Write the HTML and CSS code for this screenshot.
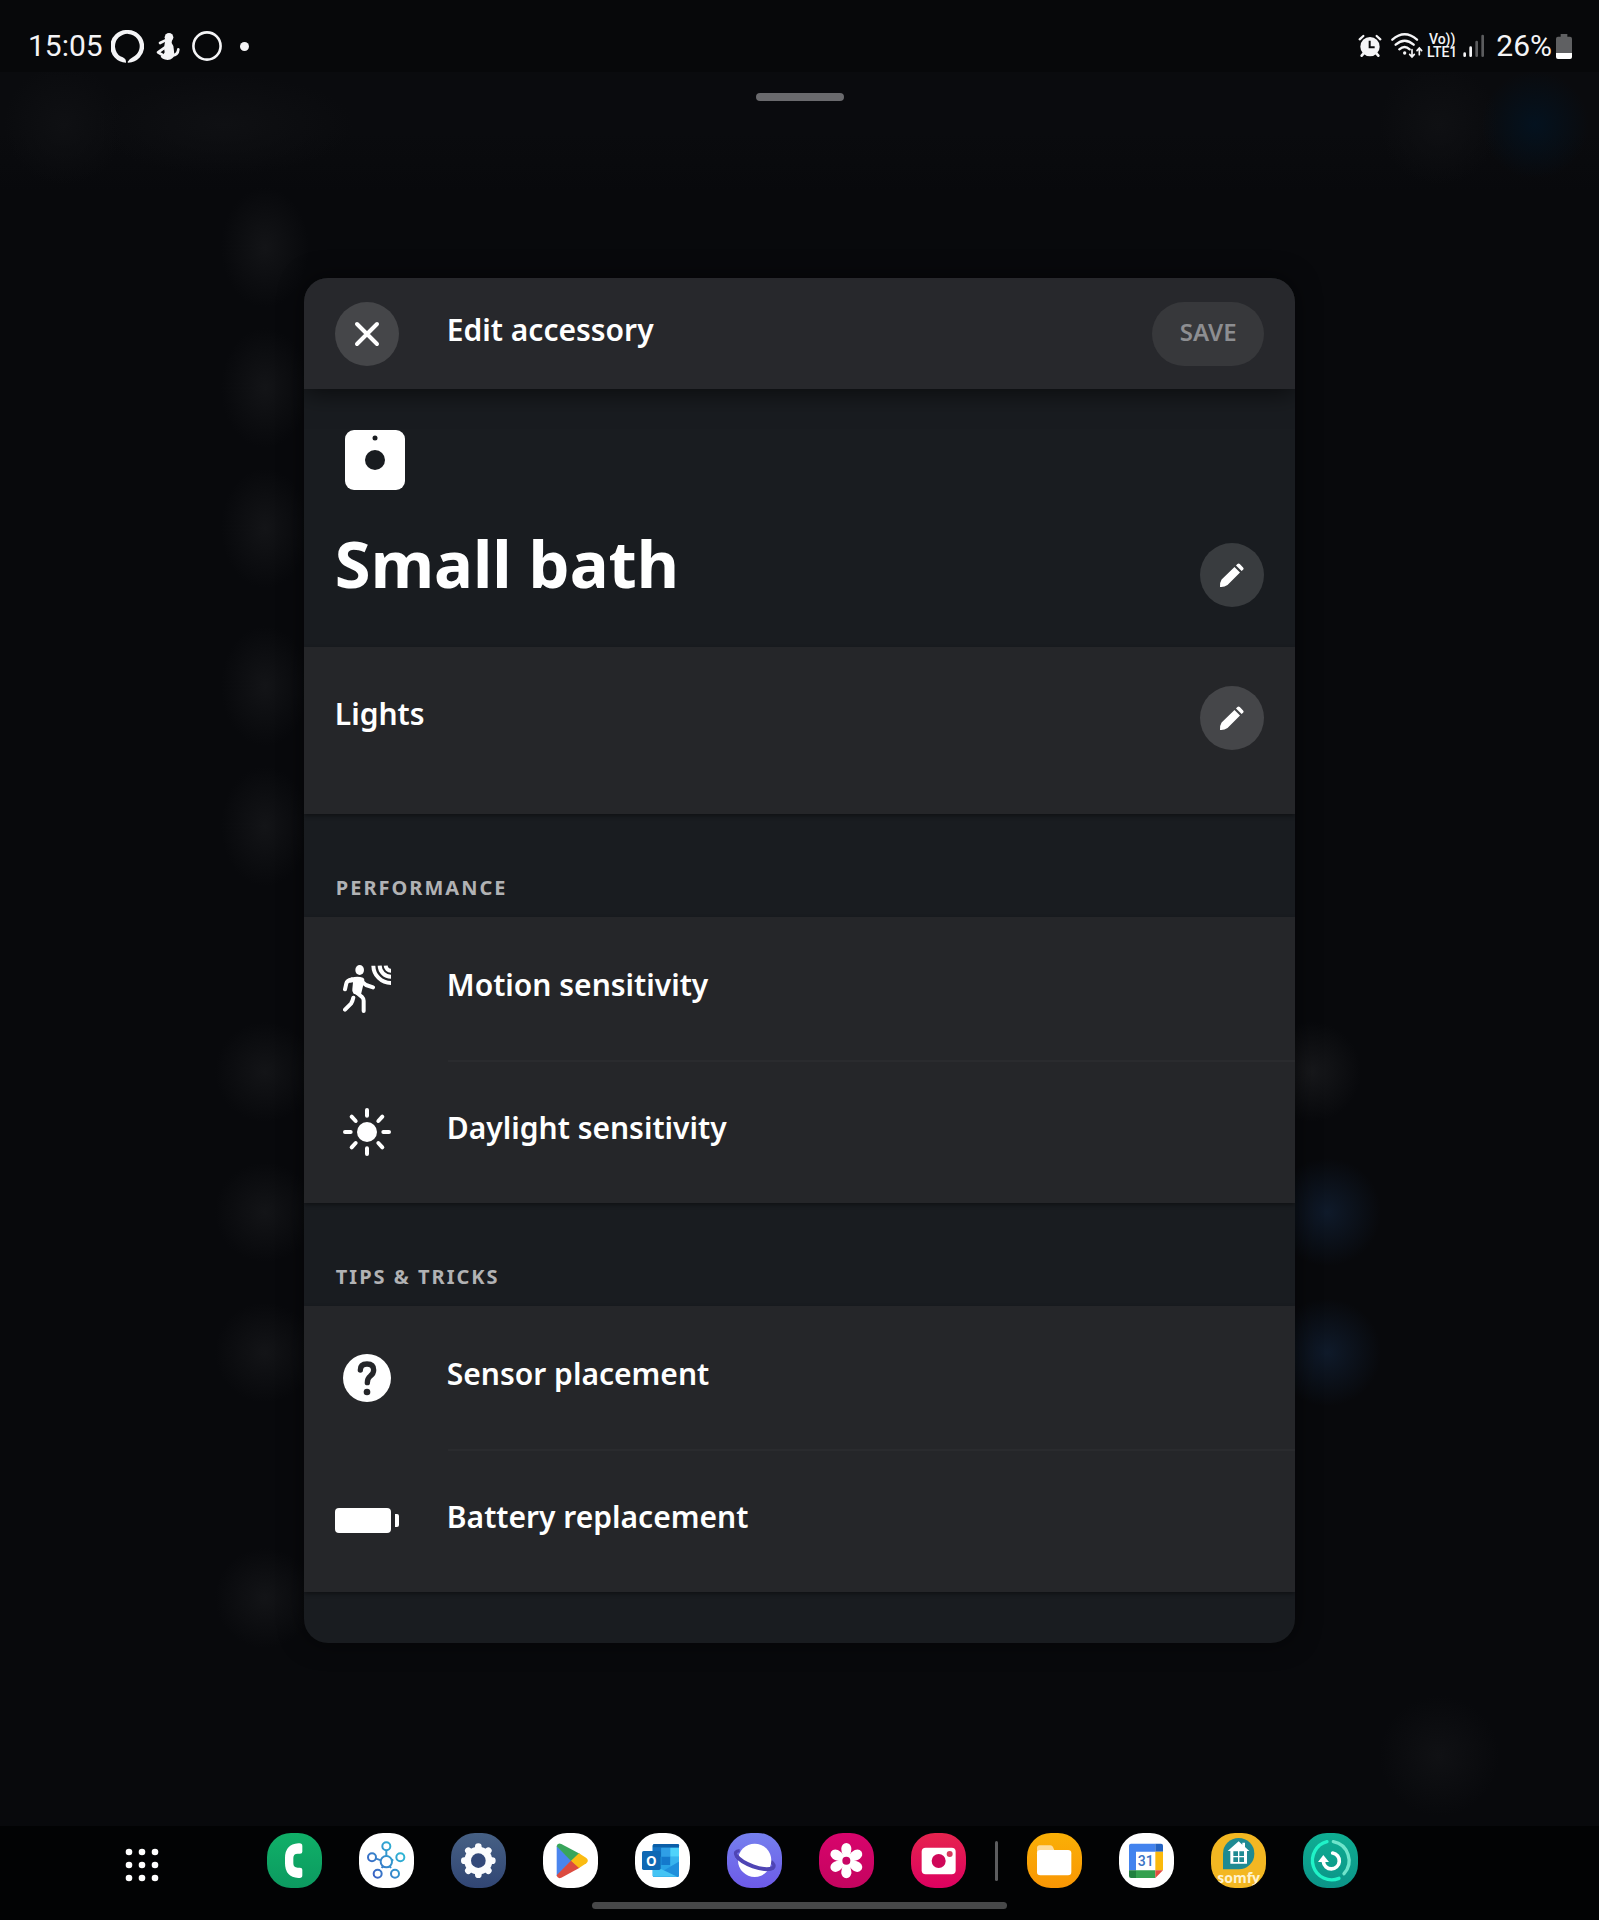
FILE: index.html
```
<!DOCTYPE html>
<html lang="en">

<head>
  <meta charset="UTF-8">
  <meta name="viewport" content="width=device-width, initial-scale=1.0">
  <title>Edit accessory</title>
  <link rel="stylesheet" href="styles.css">
</head>

<body>
  <header class="status-bar">
    <div class="status-left">
      <span class="clock">15:05</span>
      <svg class="ring-icon" width="33" height="33" viewBox="0 0 99 99">
        <path fill="#f4f4f6" fill-rule="evenodd" d="M49 0a49 49 0 0 1 3 98q-3 0-2-3 5-8 15-13A37 37 0 1 0 28 79q17 5 17 16v3A49 49 0 0 1 49 0z" />
      </svg>
      <svg class="figure-icon" width="24" height="27" viewBox="0 0 72 81">
        <g fill="none" stroke="#f4f4f6" stroke-linecap="round" stroke-linejoin="round">
          <path stroke-width="8" d="M28 22 12 30M26 44 6 58l14 8M48 68q18-2 19-19" />
        </g>
        <circle cx="39" cy="13" r="13" fill="#f4f4f6" />
        <path fill="#f4f4f6" d="M28 20h20l-1 10q6 8 6 16l2 18q-2 16-20 17Q17 80 14 70q10-4 12-12l-2-14z" />
      </svg>
      <svg width="30" height="30" viewBox="0 0 30 30">
        <circle cx="15" cy="15" r="13.6" fill="none" stroke="#f4f4f6" stroke-width="2.6" />
      </svg>
      <span class="more-dot"></span>
    </div>
    <div class="status-right">
      <svg width="24" height="24" viewBox="0 0 72 72">
        <g stroke="#f4f4f6" stroke-linecap="round" fill="none">
          <path stroke-width="7" d="M5 16 16 6M56 6l11 10" />
          <path stroke-width="8" d="m17 58-6 7M55 58l6 7" />
        </g>
        <circle cx="36" cy="38" r="29" fill="#f4f4f6" />
        <path d="M35 20v20h15" fill="none" stroke="#08090b" stroke-width="6" />
      </svg>
      <svg class="wifi-icon" width="32" height="26" viewBox="0 0 96 78">
        <g fill="none" stroke="#f4f4f6" stroke-width="7" stroke-linecap="round">
          <path d="M4 20Q41-12 78 20M14 35q27-24 54 0M25 49q16-14 31 0" />
          <path stroke-width="5" d="M63 50v20M56 64l7 8 7-8M85 65V47M78 53l7-8 7 8" />
        </g>
        <circle cx="41" cy="60" r="5" fill="#f4f4f6" />
      </svg>
      <span class="volte"><span>Vo))</span><span>LTE1</span></span>
      <svg class="signal-icon" width="22" height="24" viewBox="0 0 66 72">
        <g stroke-width="8" stroke-linecap="round">
          <path stroke="#f4f4f6" d="M5 59v6M23 41v24" />
          <path stroke="#5b5c5e" d="M41 24v41M59 6v59" />
        </g>
      </svg>
      <span class="percent">26%</span>
      <svg width="16" height="25" viewBox="0 0 48 75">
        <path fill="#5f6062" d="M14 0h20v8h8q6 0 6 6v43H0V14q0-6 6-6h8z" />
        <path fill="#fff" d="M0 57h48v12q0 6-6 6H6q-6 0-6-6z" />
      </svg>
    </div>
  </header>

  <div class="screen">
    <div class="drag-handle"></div>
    <main class="stage">
      <section class="dialog" role="dialog" aria-labelledby="dialog-title">
        <div class="dialog-header">
          <button class="round-btn" type="button" aria-label="Close">
            <svg width="26" height="26" viewBox="0 0 26 26">
              <path d="m3 3 20 20M23 3 3 23" fill="none" stroke="#fff" stroke-width="4" stroke-linecap="round" />
            </svg>
          </button>
          <h1 id="dialog-title" class="dialog-title">Edit accessory</h1>
          <button class="save-btn" type="button" disabled>SAVE</button>
        </div>

        <div class="hero">
          <svg class="device-icon" width="60" height="60" viewBox="0 0 60 60">
            <rect width="60" height="60" rx="9" fill="#fff" />
            <circle cx="30" cy="30" r="10" fill="#191c20" />
            <circle cx="30" cy="8" r="2.5" fill="#191c20" />
          </svg>
          <div class="hero-row">
            <h2 class="device-name">Small bath</h2>
            <button class="round-btn hero-btn" type="button" aria-label="Edit name">
              <svg width="26" height="26" viewBox="0 0 26 26">
                <path fill="#fff" d="M1 25q-.6-4 1.600-7.500L15.500 5l5.500 5.500L8.500 23Q5 25.500 1 25zM17 3.500l1.400-1.400q1.200-1.200 2.400 0l3.300 3.300q1.200 1.200 0 2.400L22.600 9.100z" />
              </svg>
            </button>
          </div>
        </div>

        <div class="room">
          <span class="label">Lights</span>
          <button class="round-btn" type="button" aria-label="Edit room">
            <svg width="26" height="26" viewBox="0 0 26 26">
              <path fill="#fff" d="M1 25q-.6-4 1.600-7.500L15.500 5l5.500 5.500L8.500 23Q5 25.500 1 25zM17 3.500l1.400-1.400q1.200-1.200 2.400 0l3.300 3.300q1.200 1.200 0 2.400L22.600 9.100z" />
            </svg>
          </button>
        </div>

        <h3 class="section-title">PERFORMANCE</h3>
        <div class="list">
          <button class="row" type="button">
            <span class="row-icon">
              <svg width="48" height="48" viewBox="0 0 144 144">
                <ellipse cx="50" cy="15" rx="13" ry="15" fill="#fff" />
                <path fill="#fff" d="M24 38q20-5 36 0 5 3 4 9l-7 29-4 16-21-6q-6-6-4-14l2-20-12 2z" />
                <g fill="none" stroke="#fff" stroke-width="12" stroke-linecap="round" stroke-linejoin="round">
                  <path d="M26 43q-14 3-16 12L6 73M57 50l12 10 21 7M38 80l20 17q4 4 4 10v31" />
                  <path d="M31 98q-2 10-7 18L6 134" />
                </g>
                <path fill="none" stroke="#fff" stroke-width="12" d="M91 2a53 53 0 0 0 53 52M110 2a34 34 0 0 0 34 33M128 2a16 16 0 0 0 16 15" />
              </svg>
            </span>
            <span class="label">Motion sensitivity</span>
          </button>
          <button class="row" type="button">
            <span class="row-icon">
              <svg width="48" height="48" viewBox="0 0 144 144">
                <circle cx="72" cy="72" r="30" fill="#fff" />
                <path fill="none" stroke="#fff" stroke-width="12" stroke-linecap="round" d="M72 6v17M72 121v17M6 72h17M121 72h17M26 26l12 13M118 26l-12 13M26 118l12-13M118 118l-12-13" />
              </svg>
            </span>
            <span class="label">Daylight sensitivity</span>
          </button>
        </div>

        <h3 class="section-title">TIPS &amp; TRICKS</h3>
        <div class="list">
          <button class="row" type="button">
            <span class="row-icon">
              <svg width="48" height="48" viewBox="0 0 144 144">
                <circle cx="72" cy="72" r="72" fill="#fff" />
                <path fill="none" stroke="#252629" stroke-width="16" stroke-linecap="round" d="M52 48q0-18 20-18t20 18q0 11-10 18-9 7-9 20" />
                <circle cx="72" cy="114" r="10" fill="#252629" />
              </svg>
            </span>
            <span class="label">Sensor placement</span>
          </button>
          <button class="row" type="button">
            <span class="row-icon">
              <svg width="64" height="25" viewBox="0 0 64 25">
                <rect width="56" height="25" rx="4" fill="#fff" />
                <path fill="#fff" d="M60 6h2q2 0 2 2v9q0 2-2 2h-2z" />
              </svg>
            </span>
            <span class="label">Battery replacement</span>
          </button>
        </div>
        <div class="dialog-end"></div>
      </section>
    </main>
  </div>

  <nav class="taskbar" aria-label="Taskbar">
    <div class="apps">
      <button class="app-drawer" type="button" aria-label="All apps">
        <svg width="34" height="34" viewBox="0 0 34 34" fill="#fff">
          <circle cx="4" cy="4" r="3.3" /><circle cx="17" cy="4" r="3.3" /><circle cx="30" cy="4" r="3.3" />
          <circle cx="4" cy="17" r="3.3" /><circle cx="17" cy="17" r="3.3" /><circle cx="30" cy="17" r="3.3" />
          <circle cx="4" cy="30" r="3.3" /><circle cx="17" cy="30" r="3.3" /><circle cx="30" cy="30" r="3.3" />
        </svg>
      </button>

      <div class="app-group">
        <button class="app phone" type="button" aria-label="Phone">
          <svg viewBox="0 0 165 165">
            <path fill="#fff" d="M106 39v17q0 6-7 6h-7q-13 0-13 13v16q0 13 13 13h7q7 0 7 6v17q0 8-8 8h-4q-40-3-40-44V75q0-41 40-44h4q8 0 8 8z" />
          </svg>
        </button>
        <button class="app things" type="button" aria-label="SmartThings">
          <svg viewBox="0 0 165 165">
            <defs>
              <linearGradient id="hub" gradientUnits="userSpaceOnUse" x1="40" y1="120" x2="125" y2="60">
                <stop offset="0" stop-color="#3b63c4" />
                <stop offset="1" stop-color="#2eb4d4" />
              </linearGradient>
            </defs>
            <g fill="none" stroke="url(#hub)" stroke-width="6">
              <circle cx="82" cy="86" r="17" />
              <circle cx="82" cy="40" r="12" />
              <circle cx="39" cy="73" r="12" />
              <circle cx="124" cy="73" r="12" />
              <circle cx="56" cy="122" r="12" />
              <circle cx="108" cy="122" r="12" />
              <path d="M82 52v17M51 77l15 5M98 82l5-2M72 100l-4 5M92 100l4 5" />
            </g>
          </svg>
        </button>
        <button class="app settings" type="button" aria-label="Settings">
          <svg viewBox="0 0 165 165">
            <g stroke="#fbfcfe" stroke-width="20" stroke-linecap="round">
              <path d="M82 41v84M40 83h84M52 53l60 60M112 53l-60 60" />
            </g>
            <circle cx="82" cy="83" r="42" fill="#fbfcfe" />
            <circle cx="82" cy="83" r="22" fill="#33497a" />
          </svg>
        </button>
        <button class="app white" type="button" aria-label="Play Store">
          <svg viewBox="0 0 165 165">
            <path fill="#4a85ee" d="M41 38 86 83 41 130z" />
            <path fill="#38a55a" d="M41 40q2-12 14-7l55 29-25 23z" />
            <path fill="#dc4b40" d="M41 127q2 12 14 7l55-30-25-22z" />
            <path fill="#fabb12" d="m108 61 22 14q9 8 0 16l-22 14-24-22z" />
          </svg>
        </button>
        <button class="app white" type="button" aria-label="Outlook">
          <svg viewBox="0 0 165 165">
            <path fill="#29a3e6" d="M58 33h70q4 0 4 4v90q0 4-4 4H57q-4 0-4-4V38q0-5 5-5z" />
            <path fill="#0a5ea8" d="M58 33h70q4 0 4 4v7H53v-6q0-5 5-5z" />
            <path fill="#1372c4" d="M53 44h26v27H53z" />
            <path fill="#2f9fe6" d="M79 44h27v27H79z" />
            <path fill="#4fd3fb" d="M106 44h26v27h-26z" />
            <path fill="#1479cc" d="M79 71h27v25H79z" />
            <path fill="#38b4ee" d="M106 71h26v15l-26 15z" />
            <path fill="#1f8fdc" d="m132 86-79 45q1 1 4 1h71q4 0 4-4z" />
            <path fill="#45c4f4" d="M53 96v31q0 4 4 4h70z" />
            <rect x="21" y="54" width="56" height="57" rx="5" fill="#0f68b4" />
            <text x="49" y="98" text-anchor="middle" class="glyph-o">O</text>
          </svg>
        </button>
        <button class="app browser" type="button" aria-label="Internet">
          <svg viewBox="0 0 165 165">
            <path fill="none" stroke="#4f45b4" stroke-width="10" d="M38 53Q20 54 28 68q12 18 50 32 40 14 60 5 9-8-8-22" />
            <circle cx="83" cy="82" r="50" fill="#fff" />
            <path fill="none" stroke="#4f45b4" stroke-width="12" d="M28 68q12 18 50 32 40 14 60 5" />
          </svg>
        </button>
        <button class="app gallery" type="button" aria-label="Gallery">
          <svg viewBox="0 0 165 165">
            <g fill="#fff">
              <path id="petal" d="M74 73q-8-18-7-28 2-14 15-15 13 1 15 15 1 10-7 28z" />
              <use href="#petal" transform="rotate(60 82 83)" />
              <use href="#petal" transform="rotate(120 82 83)" />
              <use href="#petal" transform="rotate(180 82 83)" />
              <use href="#petal" transform="rotate(240 82 83)" />
              <use href="#petal" transform="rotate(300 82 83)" />
              <circle cx="82" cy="83" r="18" />
            </g>
            <circle cx="82" cy="83" r="12" fill="#c90565" />
          </svg>
        </button>
        <button class="app camera" type="button" aria-label="Camera">
          <svg viewBox="0 0 165 165">
            <rect x="32" y="44" width="102" height="80" rx="12" fill="#fff" />
            <circle cx="83" cy="84" r="21" fill="#cf0759" />
            <circle cx="116" cy="63" r="9" fill="#d83a5e" />
          </svg>
        </button>
      </div>

      <span class="divider"></span>

      <div class="app-group">
        <button class="app files" type="button" aria-label="My Files">
          <svg viewBox="0 0 165 165">
            <path fill="#fedc9a" d="M30 70V45q0-8 8-8h32q6 0 8 5l5 12z" />
            <rect x="30" y="51" width="103" height="76" rx="10" fill="#fff" />
          </svg>
        </button>
        <button class="app white" type="button" aria-label="Calendar">
          <svg viewBox="0 0 165 165">
            <path fill="#4383ee" d="M36 32h73v24H51v56H30V38q0-6 6-6z" />
            <path fill="#2463c2" d="M109 32h17q6 0 6 6v18h-23z" />
            <path fill="#fab90b" d="M109 56h23v56h-23z" />
            <path fill="#34a04f" d="M51 112h58v23H51z" />
            <path fill="#218040" d="M30 112h21v23H36q-6 0-6-6z" />
            <path fill="#e34b3e" d="M109 112h23l-23 23z" />
            <text x="80" y="99" text-anchor="middle" class="glyph-day">31</text>
          </svg>
        </button>
        <button class="app somfy" type="button" aria-label="Somfy">
          <svg viewBox="0 0 165 165">
            <path fill="#1f8a92" d="M36 62a47 47 0 1 1 47 47H36z" />
            <path fill="#fff" d="M83 25l11 10v-6h8v13l13 12h-7v38H58V54h-8z" />
            <path fill="#1f8a92" d="M67 55h14v14H67zM85 55h14v14H85zM67 73h14v14H67zM85 73h14v14H85z" />
            <text x="83" y="149" text-anchor="middle" class="glyph-somfy">somfy</text>
          </svg>
        </button>
        <button class="app routine" type="button" aria-label="Device care">
          <svg viewBox="0 0 165 165">
            <g fill="none" stroke-width="10" stroke-linecap="round">
              <path stroke="#20f3c8" d="M72 26a58 58 0 1 0 36 110" />
              <path stroke="#6fe5cc" d="M91 26a58 58 0 0 1 32 96" />
            </g>
            <path fill="none" stroke="#fff" stroke-width="11" stroke-linecap="round" d="M89 60A24 24 0 1 1 61 86" />
            <path fill="#fff" d="m61 66 17 21H45z" />
          </svg>
        </button>
      </div>
    </div>
    <div class="nav-pill"></div>
  </nav>
</body>

</html>
```
FILE: styles.css
```
* {
  box-sizing: border-box;
}

body {
  margin: 0;
  min-height: 100vh;
  display: flex;
  flex-direction: column;
  font-family: "Noto Sans", "Open Sans", sans-serif;
  color: #fff;
  background-color: #07080a;
}

h1,
h2,
h3 {
  margin: 0;
}

button {
  border: 0;
  padding: 0;
  color: inherit;
  font-family: inherit;
  background: none;
  cursor: pointer;
}

svg {
  display: block;
  flex-shrink: 0;
}

/* Status bar */
.status-bar {
  display: flex;
  justify-content: space-between;
  align-items: center;
  height: 72px;
  padding: 20px 27px 0 28px;
  font-family: Roboto, sans-serif;
  color: #f4f4f6;
}

.status-left,
.status-right {
  display: flex;
  align-items: center;
}

.clock,
.percent {
  font-size: 30px;
  line-height: 32px;
}

.ring-icon {
  margin-left: 8px;
}

.figure-icon {
  margin: 0 12px;
}

.more-dot {
  width: 9px;
  height: 9px;
  margin-left: 18px;
  border-radius: 50%;
  background-color: #f4f4f6;
}

.wifi-icon {
  margin-left: 9px;
}

.volte {
  display: flex;
  flex-direction: column;
  align-items: center;
  margin: 0 6px 0 4px;
  font-size: 14px;
  font-weight: 500;
  line-height: 13px;
}

.percent {
  margin: 0 4px 0 11px;
}

/* App behind the dialog, dimmed */
.screen {
  flex: 1;
  display: flex;
  flex-direction: column;
  align-items: center;
  background-color: #08090c;
  background-image:
    radial-gradient(circle at 96% 3%, #04121f 0, #04121f00 54px),
    radial-gradient(circle at 90% 3%, #0f1013 0, #0f101300 60px),
    radial-gradient(circle at 4% 3%, #0f1013 0, #0f101300 60px),
    radial-gradient(ellipse 130px 50px at 14% 3%, #0f1013 0, #0f101300 100%),
    radial-gradient(ellipse 44px 60px at 265px 10%, #131417 0, #13141700 100%),
    radial-gradient(ellipse 44px 60px at 265px 18%, #131417 0, #13141700 100%),
    radial-gradient(ellipse 44px 60px at 265px 26%, #131417 0, #13141700 100%),
    radial-gradient(ellipse 44px 60px at 265px 35%, #131417 0, #13141700 100%),
    radial-gradient(ellipse 44px 60px at 265px 43%, #131417 0, #13141700 100%),
    radial-gradient(ellipse 50px 50px at 265px 57%, #131417 0, #13141700 100%),
    radial-gradient(ellipse 50px 50px at 265px 65%, #131417 0, #13141700 100%),
    radial-gradient(ellipse 50px 50px at 265px 73%, #131417 0, #13141700 100%),
    radial-gradient(ellipse 50px 50px at 265px 87%, #131417 0, #13141700 100%),
    radial-gradient(circle at 82% 57%, #17181b 0, #17181b00 50px),
    radial-gradient(circle at 83% 65%, #0f1a2a 0, #0f1a2a00 54px),
    radial-gradient(circle at 83% 73%, #0f1a2a 0, #0f1a2a00 54px),
    radial-gradient(circle at 90% 96%, #101114 0, #10111400 60px),
    linear-gradient(#0a0b0e 0, #0a0b0e 60px, #0a0b0e00 120px);
}

.drag-handle {
  width: 88px;
  height: 8px;
  margin-top: 21px;
  border-radius: 4px;
  background-color: #6a6a6d;
}

.stage {
  flex: 1;
  width: 62%;
  display: flex;
  flex-direction: column;
  justify-content: center;
  padding-bottom: 6px;
}

/* Dialog */
.dialog {
  overflow: hidden;
  border-radius: 24px;
  background-color: #191c20;
  box-shadow: 0 0 24px rgba(0, 0, 0, 0.5);
}

.dialog-header {
  position: relative;
  display: flex;
  align-items: center;
  height: 111px;
  padding: 0 31px;
  background-color: #27282c;
  box-shadow: 0 4px 24px rgba(0, 0, 0, 0.6);
}

.round-btn {
  display: flex;
  align-items: center;
  justify-content: center;
  flex-shrink: 0;
  width: 64px;
  height: 64px;
  border-radius: 50%;
  background-color: #454649;
}

.hero-btn {
  background-color: #393c3f;
}

.dialog-title,
.label {
  padding-bottom: 8px;
  font-size: 30px;
  font-weight: 600;
  line-height: 40px;
}

.dialog-title {
  flex: 1;
  margin-left: 48px;
}

.save-btn {
  width: 112px;
  height: 64px;
  padding-bottom: 4px;
  border-radius: 32px;
  font-size: 24px;
  font-weight: 600;
  color: #8d8e91;
  background-color: #37383b;
}

.hero {
  padding: 41px 31px 40px;
}

.device-icon {
  margin-left: 10px;
}

.hero-row {
  display: flex;
  align-items: flex-end;
  justify-content: space-between;
  height: 117px;
}

.device-name {
  font-size: 65px;
  font-weight: 700;
  line-height: 88px;
}

.room {
  display: flex;
  align-items: center;
  justify-content: space-between;
  padding: 39px 31px 64px;
  background-color: #252629;
  box-shadow: 0 2px 4px rgba(0, 0, 0, 0.4);
}

.section-title {
  height: 103px;
  padding: 60px 32px 0;
  font-size: 20px;
  font-weight: 700;
  line-height: 28px;
  letter-spacing: 2px;
  color: #b1b2b4;
}

.list {
  background-color: #252629;
  box-shadow: 0 2px 4px rgba(0, 0, 0, 0.4);
}

.row {
  display: flex;
  align-items: center;
  width: 100%;
  height: 143px;
  padding-left: 31px;
  text-align: left;
}

.row-icon {
  display: flex;
  justify-content: center;
  width: 64px;
  margin-right: 48px;
}

.row .label {
  flex: 1;
}

.row + .row {
  background: linear-gradient(#2a2b2e, #2a2b2e) 144px 0 / 100% 2px no-repeat;
}

.dialog-end {
  height: 51px;
}

/* Taskbar */
.taskbar {
  height: 94px;
  padding-top: 7px;
  background-color: #020304;
}

.apps {
  display: flex;
  align-items: center;
  padding-left: 125px;
}

.app-drawer {
  margin: 8px 108px 0 0;
}

.app-group {
  display: flex;
  gap: 37px;
}

.app {
  width: 55px;
  height: 55px;
  border-radius: 24px;
  overflow: hidden;
}

.app svg {
  width: 100%;
  height: 100%;
}

.divider {
  width: 3px;
  height: 40px;
  margin: 0 29px;
  border-radius: 2px;
  background-color: #5c5d5f;
}

.phone {
  background: linear-gradient(#10b068, #0c9a60);
}

.things,
.white {
  background-color: #fff;
}

.settings {
  background: linear-gradient(#466084, #314674);
}

.browser {
  background: linear-gradient(#7580ee, #6d5ae8);
}

.gallery {
  background: linear-gradient(#d8046c, #c4045f);
}

.camera {
  background: linear-gradient(#e6244e, #dc0060);
}

.files {
  background: linear-gradient(#fab006, #f99604);
}

.somfy {
  background-color: #f3b722;
}

.routine {
  background: linear-gradient(#0fae93, #0b9488);
}

.glyph-o {
  font: 700 40px "Open Sans", sans-serif;
  fill: #fff;
}

.glyph-day {
  font: 500 42px Roboto, sans-serif;
  fill: #3a72c4;
}

.glyph-somfy {
  font: 700 42px "Open Sans", sans-serif;
  fill: #fff3cf;
}

.nav-pill {
  width: 26%;
  height: 7px;
  margin: 14px auto 0;
  border-radius: 4px;
  background-color: #474849;
}
```
